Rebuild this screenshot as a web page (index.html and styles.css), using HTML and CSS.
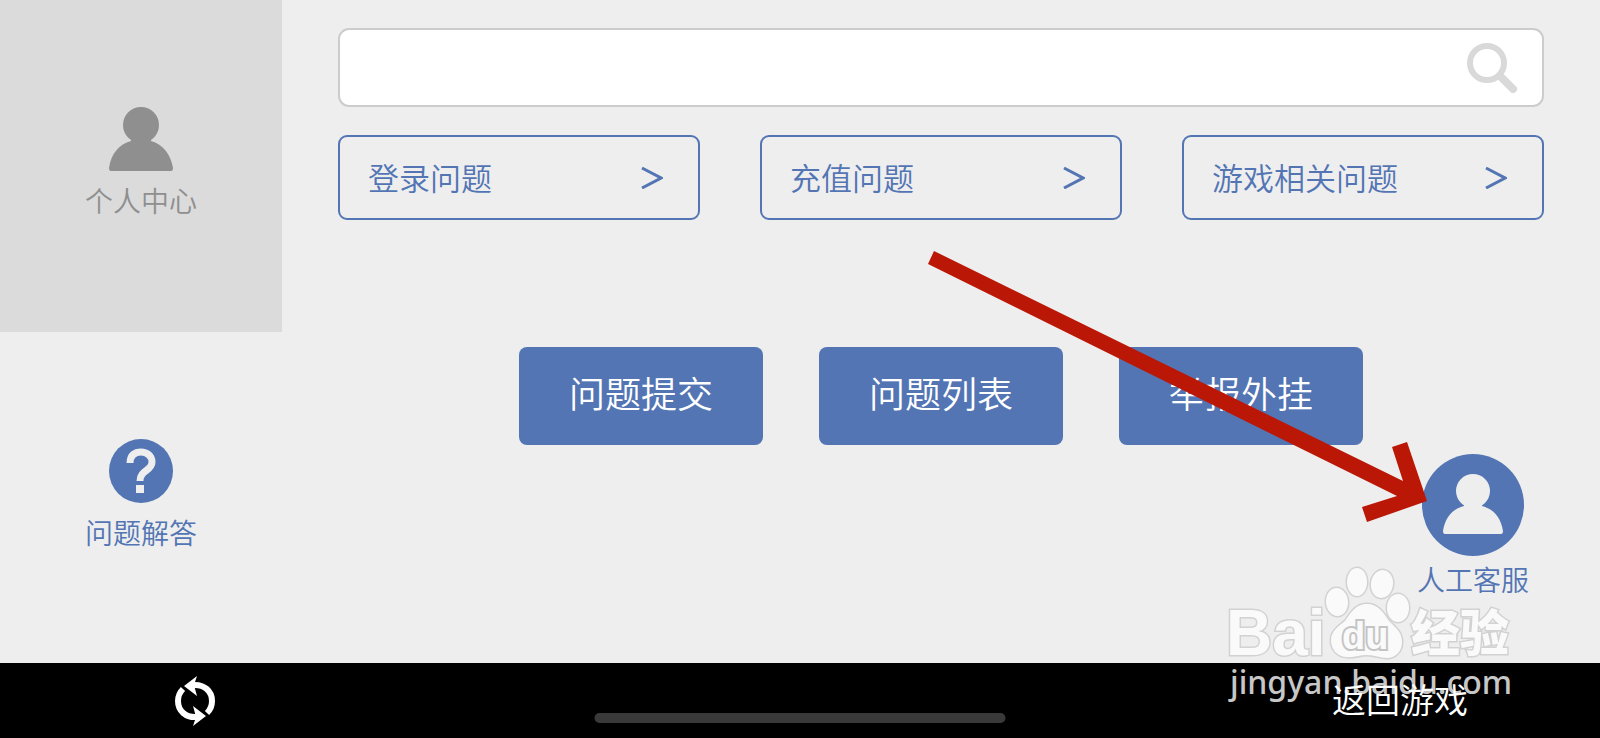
FILE: index.html
```html
<!DOCTYPE html>
<html lang="zh-CN">
<head>
    <meta charset="UTF-8">
    <meta name="viewport" content="width=device-width, initial-scale=1.0">
    <title>客服中心</title>
    <link rel="stylesheet" href="styles.css">
</head>
<body>
    <div class="page">
        <div class="content">
            <nav class="sidebar">
                <a href="#" class="side-item active">
                    <svg class="side-icon" viewBox="0 0 64 64">
                        <circle cx="32" cy="18" r="18"/>
                        <path d="M2 64Q0 64 0 61C2 47 10 37 22 34V31H42V34C54 37 62 48 64 61Q64 64 62 64Z"/>
                    </svg>
                    <span>个人中心</span>
                </a>
                <a href="#" class="side-item">
                    <svg class="side-icon" viewBox="0 0 64 64">
                        <circle cx="32" cy="32" r="32"/>
                        <path class="mark" d="M21 24C21 16 26 13 32 13C38 13 43 17 43 23C43 32 31 31 31 42"/>
                        <rect class="dot" x="27" y="46" width="8" height="8"/>
                    </svg>
                    <span>问题解答</span>
                </a>
            </nav>

            <main class="main">
                <form class="search">
                    <input type="text" class="search-input" aria-label="搜索">
                    <button type="submit" class="search-button" aria-label="搜索">
                        <svg viewBox="0 0 51 51">
                            <circle cx="20" cy="21" r="17"/>
                            <path d="M33 34L46 47"/>
                        </svg>
                    </button>
                </form>

                <div class="categories">
                    <a href="#" class="category">
                        登录问题
                        <svg viewBox="0 0 22 24"><path d="M1 3L20 13L1 23"/></svg>
                    </a>
                    <a href="#" class="category">
                        充值问题
                        <svg viewBox="0 0 22 24"><path d="M1 3L20 13L1 23"/></svg>
                    </a>
                    <a href="#" class="category">
                        游戏相关问题
                        <svg viewBox="0 0 22 24"><path d="M1 3L20 13L1 23"/></svg>
                    </a>
                </div>

                <div class="actions">
                    <button type="button">问题提交</button>
                    <button type="button">问题列表</button>
                    <button type="button">举报外挂</button>
                </div>

                <a href="#" class="service">
                    <svg viewBox="0 0 102 102">
                        <circle class="disc" cx="51" cy="51" r="51"/>
                        <circle cx="51" cy="37" r="17"/>
                        <path d="M23 80Q21 80 21 77C23 64 30 55 42 52V47H60V52C72 55 79 64 81 77Q81 80 79 80Z"/>
                    </svg>
                    <span>人工客服</span>
                </a>
            </main>
        </div>

        <footer class="footer">
            <button type="button" class="refresh" aria-label="刷新">
                <svg viewBox="0 0 40 52">
                    <path class="arc" d="M18 10C29 9 37 16 37 26C37 31 35 35 32 38"/>
                    <path class="arc" d="M22 42C11 43 3 36 3 26C3 21 5 17 8 14"/>
                    <path class="head" d="M9 11L22 1L19 10L22 21Z"/>
                    <path class="head" d="M31 41L18 51L21 42L18 31Z"/>
                </svg>
            </button>
            <a href="#" class="back">返回游戏</a>
            <div class="home-bar"></div>
        </footer>

        <!-- 指向人工客服的箭头 -->
        <svg class="arrow" viewBox="0 0 500 272">
            <path d="M6 0L475 230L464 196L479 191L499 250L439 271L434 256L469 245L0 13Z"/>
        </svg>

        <!-- 水印 -->
        <svg class="watermark" viewBox="0 0 300 140">
            <g class="logo">
                <text class="bai" x="6" y="91">Bai</text>
                <ellipse cx="117" cy="38" rx="11" ry="14" transform="rotate(-5 117 38)"/>
                <ellipse cx="137" cy="18" rx="10" ry="14"/>
                <ellipse cx="162" cy="20" rx="11" ry="14" transform="rotate(8 162 20)"/>
                <ellipse cx="178" cy="44" rx="11" ry="14"/>
                <path d="M147 40C158 40 163 48 169 57C175 63 182 68 182 78C182 88 175 94 167 94C160 94 155 91 147 91C139 91 134 94 127 93C117 93 111 85 111 76C111 67 119 62 125 57C131 48 136 40 147 40Z"/>
                <text class="du" x="122" y="85">du</text>
                <text class="jy" x="191" y="87">经验</text>
            </g>
            <text class="url" x="10" y="130">jingyan.baidu.com</text>
        </svg>
    </div>
</body>
</html>
```

FILE: styles.css
```css
* {
    box-sizing: border-box;
}
body {
    margin: 0;
    background-color: #eee;
    color: #5375b4;
    font-family: "Noto Sans CJK SC", sans-serif;
    font-weight: 350;
}
a {
    color: inherit;
    text-decoration: none;
}
button {
    border: none;
    padding: 0;
    font: inherit;
    cursor: pointer;
}
svg {
    display: block;
}
.page {
    position: relative;
    display: flex;
    flex-direction: column;
    min-height: 100vh;
    overflow: hidden;
}
.content {
    flex: 1;
    display: flex;
}

/* 左侧导航 */
.sidebar {
    width: 282px;
    flex-shrink: 0;
    display: flex;
    flex-direction: column;
}
.side-item {
    flex: 1;
    display: flex;
    flex-direction: column;
    align-items: center;
    gap: 10px;
    padding-top: 107px;
    font-size: 28px;
    line-height: 38px;
}
.side-item.active {
    background-color: #dbdbdb;
    color: #8f8f8f;
}
.side-icon {
    width: 64px;
    height: 64px;
    fill: currentColor;
}
.side-icon .mark {
    fill: none;
    stroke: #eee;
    stroke-width: 7;
}
.side-icon .dot {
    fill: #eee;
}

/* 主区域 */
.main {
    flex: 1;
    display: flex;
    flex-direction: column;
    padding: 28px 56px;
}
.search {
    display: flex;
    align-items: center;
    height: 79px;
    padding-right: 24px;
    background: white;
    border: 2px solid #ccc;
    border-radius: 11px;
}
.search-input {
    flex: 1;
    height: 100%;
    padding: 0 28px;
    border: none;
    outline: none;
    background: transparent;
    font: inherit;
    font-size: 31px;
}
.search-button {
    background: transparent;
}
.search-button svg {
    width: 51px;
    height: 51px;
    fill: none;
    stroke: #d9d9d9;
    stroke-width: 6;
    stroke-linecap: round;
}
.search-button path {
    stroke-width: 8;
}
.categories {
    display: grid;
    grid-template-columns: repeat(3, 1fr);
    gap: 60px;
    margin-top: 28px;
}
.category {
    display: flex;
    align-items: center;
    justify-content: space-between;
    height: 85px;
    padding: 0 35px 2px 28px;
    border: 2px solid #5375b4;
    border-radius: 9px;
    font-size: 31px;
}
.category svg {
    width: 22px;
    height: 24px;
    fill: none;
    stroke: #5375b4;
    stroke-width: 3;
}
.actions {
    display: flex;
    justify-content: center;
    gap: 56px;
    margin-top: 127px;
}
.actions button {
    width: 244px;
    height: 98px;
    padding-bottom: 8px;
    border-radius: 8px;
    background-color: #5375b4;
    color: white;
    font-size: 36px;
}
.service {
    align-self: flex-end;
    display: flex;
    flex-direction: column;
    align-items: center;
    gap: 4px;
    margin: 9px 15px 0 0;
    font-size: 28px;
    line-height: 38px;
}
.service svg {
    width: 102px;
    height: 102px;
    fill: #eee;
}
.service .disc {
    fill: #5375b4;
}

/* 底部 */
.footer {
    position: relative;
    display: flex;
    align-items: center;
    justify-content: space-between;
    height: 75px;
    padding: 0 132px 0 175px;
    background-color: black;
    color: white;
}
.refresh {
    background: transparent;
}
.refresh svg {
    width: 40px;
    height: 52px;
    fill: white;
}
.refresh .arc {
    fill: none;
    stroke: white;
    stroke-width: 6;
}
.back {
    padding-bottom: 4px;
    font-size: 34px;
}
.home-bar {
    position: absolute;
    left: 50%;
    bottom: 15px;
    width: 411px;
    height: 10px;
    border-radius: 5px;
    background-color: #393939;
    transform: translateX(-50%);
}

.arrow {
    position: absolute;
    top: 251px;
    right: 172px;
    width: 500px;
    height: 272px;
    fill: #bb1706;
    pointer-events: none;
}
.watermark {
    position: absolute;
    right: 80px;
    bottom: 34px;
    width: 300px;
    height: 140px;
    pointer-events: none;
}
.watermark .logo {
    fill: #fafafa;
    stroke: #d2d2d2;
    stroke-width: 3;
    paint-order: stroke;
}
.watermark .bai {
    font: bold 64px "Liberation Sans", sans-serif;
}
.watermark .du {
    font: bold 38px "Liberation Sans", sans-serif;
    stroke: #c4c4c4;
    stroke-width: 4;
}
.watermark .jy {
    font: 900 49px "Noto Sans CJK SC", sans-serif;
}
.watermark .url {
    font: 500 32px "Noto Sans", sans-serif;
    fill: #fff;
    fill-opacity: 0.8;
}
```
